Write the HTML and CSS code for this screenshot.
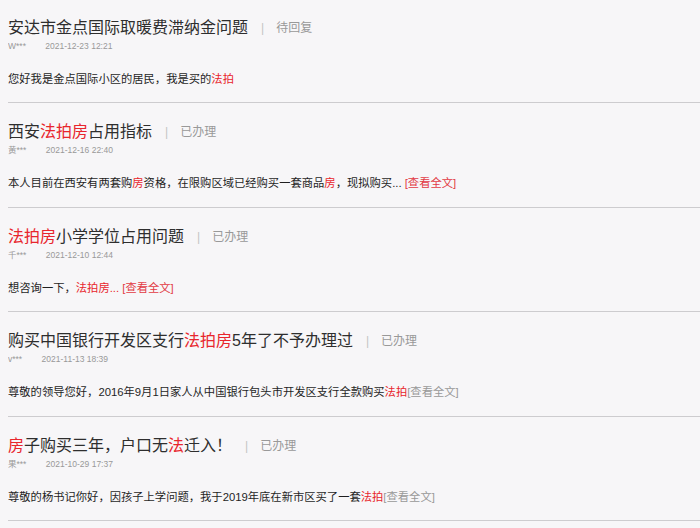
FILE: index.html
```html
<!DOCTYPE html>
<html lang="zh-CN">
<head>
    <meta charset="UTF-8">
    <meta name="viewport" content="width=device-width, initial-scale=1.0">
    <title>留言列表</title>
    <link rel="stylesheet" href="styles.css">
</head>
<body>
    <ul class="msg-list">
        <li class="msg">
            <div class="msg-title">
                <span class="title-text">安达市金点国际取暖费滞纳金问题</span>
                <span class="sep">|</span>
                <span class="status">待回复</span>
            </div>
            <div class="msg-meta">
                <span class="user">W***</span>
                <span class="date">2021-12-23 12:21</span>
            </div>
            <p class="msg-body">您好我是金点国际小区的居民，我是买的<em class="hl">法拍</em></p>
        </li>
        <li class="msg">
            <div class="msg-title">
                <span class="title-text">西安<em class="hl">法拍房</em>占用指标</span>
                <span class="sep">|</span>
                <span class="status">已办理</span>
            </div>
            <div class="msg-meta">
                <span class="user">黄***</span>
                <span class="date">2021-12-16 22:40</span>
            </div>
            <p class="msg-body">本人目前在西安有两套购<em class="hl">房</em>资格，在限购区域已经购买一套商品<em class="hl">房</em>，现拟购买... <a class="more red" href="#">[查看全文]</a></p>
        </li>
        <li class="msg">
            <div class="msg-title">
                <span class="title-text"><em class="hl">法拍房</em>小学学位占用问题</span>
                <span class="sep">|</span>
                <span class="status">已办理</span>
            </div>
            <div class="msg-meta">
                <span class="user">千***</span>
                <span class="date">2021-12-10 12:44</span>
            </div>
            <p class="msg-body">想咨询一下，<em class="hl">法拍房...</em> <a class="more red" href="#">[查看全文]</a></p>
        </li>
        <li class="msg">
            <div class="msg-title">
                <span class="title-text">购买中国银行开发区支行<em class="hl">法拍房</em>5年了不予办理过</span>
                <span class="sep">|</span>
                <span class="status">已办理</span>
            </div>
            <div class="msg-meta">
                <span class="user">v***</span>
                <span class="date">2021-11-13 18:39</span>
            </div>
            <p class="msg-body">尊敬的领导您好，2016年9月1日家人从中国银行包头市开发区支行全款购买<em class="hl">法拍</em><a class="more" href="#">[查看全文]</a></p>
        </li>
        <li class="msg">
            <div class="msg-title">
                <span class="title-text"><em class="hl">房</em>子购买三年，户口无<em class="hl">法</em>迁入！</span>
                <span class="sep">|</span>
                <span class="status">已办理</span>
            </div>
            <div class="msg-meta">
                <span class="user">果***</span>
                <span class="date">2021-10-29 17:37</span>
            </div>
            <p class="msg-body">尊敬的杨书记你好，因孩子上学问题，我于2019年底在新市区买了一套<em class="hl">法拍</em><a class="more" href="#">[查看全文]</a></p>
        </li>
    </ul>
</body>
</html>
```

FILE: styles.css
```css
/* General Styles */
body {
    margin: 0 0 0 8px;
    background-color: #f7f6f8;
    color: #333;
    font-family: "Liberation Sans", "Noto Sans CJK SC", sans-serif;
    overflow: hidden;
}

.msg-list {
    list-style: none;
    margin: 0;
    padding: 0;
}

.msg {
    padding: 17px 0 15.5px;
    border-bottom: 1px solid #cdcccf;
}

.msg:first-child {
    padding-top: 15.5px;
}

.msg-title {
    display: flex;
    align-items: center;
    height: 24px;
    line-height: 24px;
}

.title-text {
    font-size: 16px;
    color: #2e2e2e;
}

.sep {
    margin: 0 12px 0 13px;
    font-size: 12px;
    color: #c4c4c4;
}

.status {
    font-size: 12px;
    color: #999;
}

.msg-meta {
    margin-top: 0;
    height: 12px;
    line-height: 12px;
    font-size: 8.5px;
    color: #999;
}

.user {
    margin-right: 17px;
}

.msg-body {
    margin: 19px 0 0;
    line-height: 16px;
    font-size: 11.3px;
    color: #1f1f1f;
}

.hl {
    font-style: normal;
    color: #e8262d;
}

.more {
    text-decoration: none;
    color: #999;
}

.more.red {
    color: #e23a44;
}
```
